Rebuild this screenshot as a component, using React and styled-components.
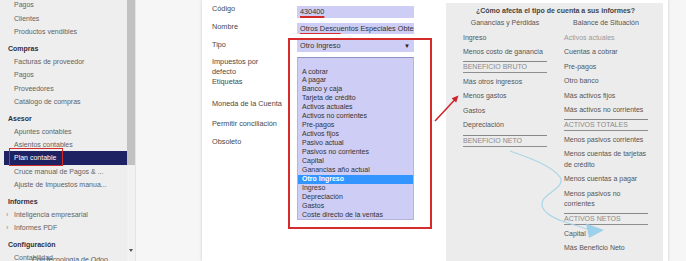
import React from "react";
import styled, { createGlobalStyle } from "styled-components";

const GlobalStyle = createGlobalStyle`
  html, body {
    margin: 0;
    padding: 0;
  }
  body {
    width: 686px;
    height: 261px;
    overflow: hidden;
    background: #f5f5f5;
    font-family: "Liberation Sans", Arial, sans-serif;
    font-size: 7px;
    color: #555;
  }
`;

const Page = styled.div`
  position: relative;
  display: flex;
  width: 686px;
  height: 261px;
  overflow: hidden;
`;

/* ---------- sidebar ---------- */

const Sidebar = styled.nav`
  position: relative;
  width: 127px;
  flex-shrink: 0;
  background: #eeeeee;
  overflow: hidden;
`;

const MenuList = styled.div`
  display: flex;
  flex-direction: column;
  margin-top: -1.65px;
`;

const MenuHeader = styled.div`
  height: 13.3px;
  line-height: 13.3px;
  margin-top: 3.4px;
  padding-left: 8px;
  font-weight: bold;
  color: #2f2f3f;
`;

const MenuItem = styled.div`
  position: relative;
  height: 13.3px;
  line-height: 13.3px;
  margin-left: 4px;
  padding-left: 10px;
  white-space: nowrap;
  color: ${(p) => (p.active ? "#ffffff" : "#636363")};
  background: ${(p) => (p.active ? "#1f2262" : "transparent")};
`;

const Caret = styled.span`
  display: inline-block;
  width: 8px;
  margin-left: -8px;
  color: #888;
`;

const MarkBox = styled.span`
  position: absolute;
  left: 5px;
  top: -3.6px;
  width: 54px;
  height: 18px;
  border: 1.5px solid #d42a2a;
  box-sizing: border-box;
`;

const SidebarFooter = styled.div`
  position: absolute;
  left: 32px;
  top: 254.5px;
  line-height: 9px;
  color: #555;
  white-space: nowrap;
`;

const Scrollbar = styled.div`
  position: relative;
  width: 8px;
  flex-shrink: 0;
  background: #f1f1f1;
`;

const Thumb = styled.div`
  height: 165px;
  background: #c1c1c1;
`;

const ScrollArrow = styled.div`
  position: absolute;
  left: 2px;
  bottom: 9px;
  width: 0;
  height: 0;
  border-left: 2px solid transparent;
  border-right: 2px solid transparent;
  border-top: 3px solid #555;
`;

/* ---------- main area ---------- */

const Main = styled.main`
  flex: 1;
  display: flex;
  background: #f6f6f6;
  border-left: 1px solid #e4e4e4;
  padding-left: 66px;
`;

const Sheet = styled.div`
  position: relative;
  display: flex;
  width: 466px;
  height: 261px;
  box-sizing: border-box;
  padding-left: 10px;
  background: #ffffff;
  box-shadow: 0 0 3px rgba(0, 0, 0, 0.18);
`;

const Form = styled.div`
  display: flex;
  flex-direction: column;
  width: 220px;
  padding-top: 4px;
`;

const Row = styled.div`
  display: grid;
  grid-template-columns: 85px 117px;
  height: ${(p) => p.h}px;
`;

const Label = styled.div`
  padding-top: ${(p) => p.pt || 0}px;
  line-height: 10px;
  font-size: 7.3px;
  color: #484848;
`;

const Field = styled.div`
  margin-top: 2px;
  height: ${(p) => p.h}px;
  line-height: ${(p) => p.h}px;
  padding-left: 3px;
  background: #cdcdf5;
  color: #333;
  font-size: 7.3px;
  white-space: nowrap;
  overflow: hidden;
`;

const Marked = styled.span`
  text-decoration: underline;
  text-decoration-color: #d42a2a;
  text-decoration-thickness: 1.5px;
  text-underline-offset: 1.5px;
`;

const SelectWrap = styled.div`
  position: relative;
`;

const SelectBox = styled(Field)`
  display: flex;
  justify-content: space-between;
  padding-right: 4px;
`;

const SelectArrow = styled.span`
  font-size: 6px;
  color: #222;
`;

const OptionList = styled.div`
  position: absolute;
  left: 0;
  top: 100%;
  z-index: 2;
  width: 117px;
  height: 163px;
  box-sizing: border-box;
  padding-top: 9.5px;
  background: #cdcdf6;
  border: 1px solid #b4b4de;
  border-top-color: #9090c4;
`;

const Option = styled.div`
  height: 8.94px;
  line-height: 8.94px;
  padding-left: 4px;
  white-space: nowrap;
  color: ${(p) => (p.selected ? "#ffffff" : "#333")};
  background: ${(p) => (p.selected ? "#3395ff" : "transparent")};
  font-weight: ${(p) => (p.selected ? "bold" : "normal")};
`;

const RedFrame = styled.div`
  position: absolute;
  left: 86px;
  top: 38px;
  width: 144px;
  height: 191px;
  box-sizing: border-box;
  border: 2px solid #d52b2b;
  pointer-events: none;
`;

/* ---------- help panel ---------- */

const HelpPanel = styled.aside`
  margin: 3px 0 0 14px;
  width: 217px;
  box-sizing: border-box;
  padding: 0 15px 0 17px;
  background: #ececec;
`;

const HelpTitle = styled.div`
  padding-top: 2.5px;
  line-height: 10px;
  text-align: center;
  font-weight: bold;
  color: #444;
  white-space: nowrap;
`;

const Columns = styled.div`
  display: grid;
  grid-template-columns: 84px 84px;
  column-gap: 17px;
`;

const Column = styled.div`
  display: flex;
  flex-direction: column;
`;

const ColHead = styled.div`
  padding: 2.5px 0 2px;
  line-height: 10.5px;
  text-align: center;
  color: #555;
  white-space: nowrap;
`;

const Item = styled.div`
  padding: 2px 0;
  line-height: 10.5px;
  color: ${(p) => (p.muted ? "#9a9a9a" : "#555")};
`;

const Total = styled.div`
  margin: ${(p) => p.mt || 1.5}px 0 1.5px;
  line-height: 10px;
  border-top: 1.5px solid #888;
  border-bottom: 1.5px solid #8e8e8e;
  color: #8a8a8a;
  text-transform: uppercase;
  white-space: nowrap;
`;

const Annotations = styled.svg`
  position: absolute;
  left: 0;
  top: 0;
  pointer-events: none;
`;

const topMenu = ["Pagos", "Clientes", "Productos vendibles"];

const menu = [
  {
    title: "Compras",
    items: ["Facturas de proveedor", "Pagos", "Proveedores", "Catálogo de compras"],
  },
  {
    title: "Asesor",
    items: [
      "Apuntes contables",
      "Asientos contables",
      "Plan contable",
      "Cruce manual de Pagos & ...",
      "Ajuste de Impuestos manua...",
    ],
  },
  { title: "Informes", items: ["›Inteligencia empresarial", "›Informes PDF"] },
  { title: "Configuración", items: ["Contabilidad"] },
];

const accountTypes = [
  "A cobrar",
  "A pagar",
  "Banco y caja",
  "Tarjeta de crédito",
  "Activos actuales",
  "Activos no corrientes",
  "Pre-pagos",
  "Activos fijos",
  "Pasivo actual",
  "Pasivos no corrientes",
  "Capital",
  "Ganancias año actual",
  "Otro Ingreso",
  "Ingreso",
  "Depreciación",
  "Gastos",
  "Coste directo de la ventas",
];

function App() {
  return (
    <Page>
      <GlobalStyle />
      <Sidebar>
        <MenuList>
          {topMenu.map((t, i) => (
            <MenuItem key={i}>{t}</MenuItem>
          ))}
          {menu.map((group) => (
            <React.Fragment key={group.title}>
              <MenuHeader>{group.title}</MenuHeader>
              {group.items.map((t) => {
                const active = t === "Plan contable";
                const caret = t.startsWith("›");
                return (
                  <MenuItem key={t} active={active}>
                    {caret && <Caret>›</Caret>}
                    {caret ? t.slice(1) : t}
                    {active && <MarkBox />}
                  </MenuItem>
                );
              })}
            </React.Fragment>
          ))}
        </MenuList>
        <SidebarFooter>Con tecnología de Odoo</SidebarFooter>
      </Sidebar>
      <Scrollbar>
        <Thumb />
        <ScrollArrow />
      </Scrollbar>

      <Main>
        <Sheet>
          <Form>
            <Row h={17}>
              <Label>Código</Label>
              <Field h={12}>
                <Marked>430400</Marked>
              </Field>
            </Row>
            <Row h={17}>
              <Label pt={0.5}>Nombre</Label>
              <Field h={11}>
                <Marked>Otros Descu</Marked>entos Especiales Obtenidos
              </Field>
            </Row>
            <Row h={19}>
              <Label pt={1.5}>Tipo</Label>
              <SelectWrap>
                <SelectBox h={12}>
                  <span>Otro Ingreso</span>
                  <SelectArrow>▼</SelectArrow>
                </SelectBox>
                <OptionList>
                  {accountTypes.map((t) => (
                    <Option key={t} selected={t === "Otro Ingreso"}>
                      {t}
                    </Option>
                  ))}
                </OptionList>
              </SelectWrap>
            </Row>
            <Row h={20}>
              <Label>
                Impuestos por
                <br />
                defecto
              </Label>
            </Row>
            <Row h={17}>
              <Label>Etiquetas</Label>
            </Row>
            <Row h={20}>
              <Label pt={5}>Moneda de la Cuenta</Label>
            </Row>
            <Row h={20}>
              <Label pt={5}>Permitir conciliación</Label>
            </Row>
            <Row h={16}>
              <Label pt={3}>Obsoleto</Label>
            </Row>
          </Form>

          <HelpPanel>
            <HelpTitle>¿Cómo afecta el tipo de cuenta a sus informes?</HelpTitle>
            <Columns>
              <Column>
                <ColHead>Ganancias y Pérdidas</ColHead>
                <Item>Ingreso</Item>
                <Item>Menos costo de ganancia</Item>
                <Total>Beneficio bruto</Total>
                <Item>Más otros ingresos</Item>
                <Item>Menos gastos</Item>
                <Item>Gastos</Item>
                <Item>Depreciación</Item>
                <Total mt={2.5}>Beneficio neto</Total>
              </Column>
              <Column>
                <ColHead>Balance de Situación</ColHead>
                <Item muted>Activos actuales</Item>
                <Item>Cuentas a cobrar</Item>
                <Item>Pre-pagos</Item>
                <Item>Otro banco</Item>
                <Item>Más activos fijos</Item>
                <Item>Más activos no corrientes</Item>
                <Total>Activos totales</Total>
                <Item>Menos pasivos corrientes</Item>
                <Item>Menos cuentas de tarjetas de crédito</Item>
                <Item>Menos cuentas a pagar</Item>
                <Item>Menos pasivos no corrientes</Item>
                <Total>Activos netos</Total>
                <Item>Capital</Item>
                <Item>Más Beneficio Neto</Item>
              </Column>
            </Columns>
          </HelpPanel>

          <RedFrame />
        </Sheet>
      </Main>

      <Annotations width="686" height="261" viewBox="0 0 686 261">
        <path
          d="M510,151 C530,158 552,166 560,177 C566,186 548,192 543,200 C538,210 552,218 565,222 L587,229"
          fill="none"
          stroke="#acd5e6"
          strokeWidth="1.2"
        />
        <polygon points="586,223.5 604,230 589,238" fill="#9dd0ea" />
        <line x1="435" y1="121" x2="455" y2="99.5" stroke="#d0202a" strokeWidth="1.5" />
        <polygon points="458.5,95.5 456.2,102.4 451.6,98.3" fill="#d0202a" />
      </Annotations>
    </Page>
  );
}

export default App;
